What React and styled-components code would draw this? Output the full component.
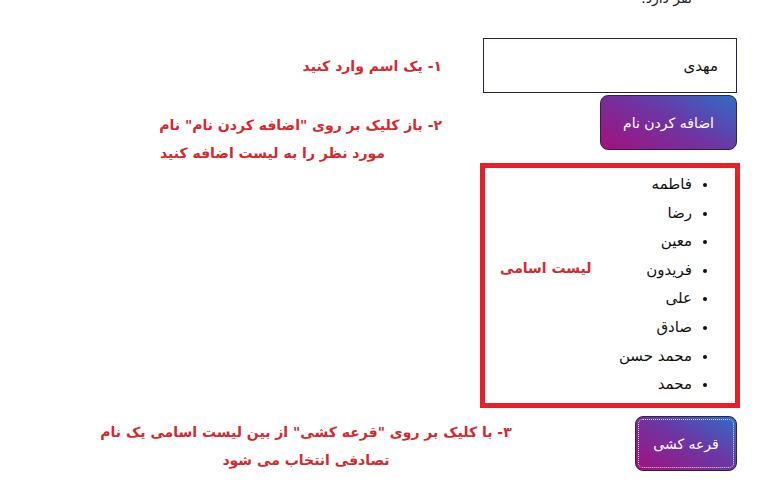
import React from 'react';
import styled, { createGlobalStyle } from 'styled-components';

const names = ['فاطمه', 'رضا', 'معین', 'فریدون', 'علی', 'صادق', 'محمد حسن', 'محمد'];

const GlobalStyle = createGlobalStyle`
  html, body {
    margin: 0;
    padding: 0;
    background: #ffffff;
  }
  body {
    font-family: "DejaVu Sans", "Noto Sans", sans-serif;
    overflow: hidden;
  }
`;

const App = () => (
  <>
    <GlobalStyle />
    <Page>
      <TopText>نفر دارد.</TopText>

      <NameInput dir="rtl" defaultValue="مهدی" />
      <Note $row={2}>
        <NoteLine>۱- یک اسم وارد کنید</NoteLine>
      </Note>

      <GradientButton $width={137}>اضافه کردن نام</GradientButton>
      <Note $row="3 / span 2" $start $offset={18}>
        <NoteLine>۲- باز کلیک بر روی "اضافه کردن نام" نام</NoteLine>
        <NoteLine $shift={57}>مورد نظر را به لیست اضافه کنید</NoteLine>
      </Note>

      <ListBox dir="rtl">
        <NameList>
          {names.map((n) => (
            <li key={n}>{n}</li>
          ))}
        </NameList>
        <ListLabel>لیست اسامی</ListLabel>
      </ListBox>

      <GradientButton $width={102} $focused $gap={8}>
        قرعه کشی
      </GradientButton>
      <Note $row={5} $start $offset={10} $center>
        <NoteLine>۳- با کلیک بر روی "قرعه کشی" از بین لیست اسامی یک نام</NoteLine>
        <NoteLine>تصادفی انتخاب می شود</NoteLine>
      </Note>
    </Page>
  </>
);

export default App;

const Page = styled.div`
  display: grid;
  grid-template-columns: 480px 260px;
  width: 774px;
  height: 500px;
  align-content: start;
`;

const TopText = styled.div`
  grid-column: 2;
  margin-top: -12px;
  margin-bottom: 30px;
  padding-right: 48px;
  direction: rtl;
  text-align: right;
  font-size: 14px;
  line-height: 20px;
  color: #222;
`;

const NameInput = styled.input`
  grid-column: 2;
  grid-row: 2;
  box-sizing: border-box;
  width: 254px;
  height: 55px;
  margin: 0 3px;
  padding: 0 18px;
  border: 1px solid #23214a;
  border-radius: 0;
  font-family: "DejaVu Sans", sans-serif;
  font-size: 15px;
  color: #111;
  text-align: right;
  outline: none;
  caret-color: #000;
`;

const Note = styled.div`
  grid-column: 1;
  grid-row: ${(p) => p.$row};
  align-self: ${(p) => (p.$start ? 'start' : 'center')};
  margin-top: ${(p) => p.$offset || 0}px;
  direction: rtl;
  padding-right: 38px;
  display: flex;
  flex-direction: column;
  align-items: ${(p) => (p.$center ? 'center' : 'flex-start')};
  ${(p) => p.$center && 'padding: 0 0 0 96px; width: 420px;'}
  color: #d8282d;
  font-weight: bold;
  font-size: 14px;
  line-height: 28px;
`;

const NoteLine = styled.div`
  white-space: nowrap;
  padding-right: ${(p) => p.$shift || 0}px;
`;

const GradientButton = styled.button`
  grid-column: 2;
  justify-self: end;
  box-sizing: border-box;
  width: ${(p) => p.$width}px;
  height: 55px;
  margin: ${(p) => p.$gap || 2}px 3px 0 0;
  border: 1px solid #2a2452;
  border-radius: 8px;
  background: linear-gradient(30deg, #a3117d 0%, #6b37a4 55%, #2f6dc7 100%);
  color: #fff;
  font-family: "DejaVu Sans", sans-serif;
  font-size: 14px;
  direction: rtl;
  cursor: pointer;
  outline: ${(p) => (p.$focused ? '1px dotted #d8d8f0' : 'none')};
  outline-offset: -4px;
`;

const ListBox = styled.div`
  grid-column: 2;
  box-sizing: border-box;
  height: 245px;
  margin-top: 13px;
  border: 5px solid #e5202a;
  display: flex;
  flex-direction: row;
  padding: 2px 0 5px 15px;
`;

const NameList = styled.ul`
  margin: 0;
  padding: 0 43px 0 0;
  list-style: disc;
  font-size: 15px;
  line-height: 28.6px;
  color: #111;

  li::marker {
    font-size: 13px;
  }
`;

const ListLabel = styled.div`
  margin-right: auto;
  margin-top: 84px;
  align-self: flex-start;
  color: #d8282d;
  font-weight: bold;
  font-size: 14px;
  line-height: 28px;
`;
